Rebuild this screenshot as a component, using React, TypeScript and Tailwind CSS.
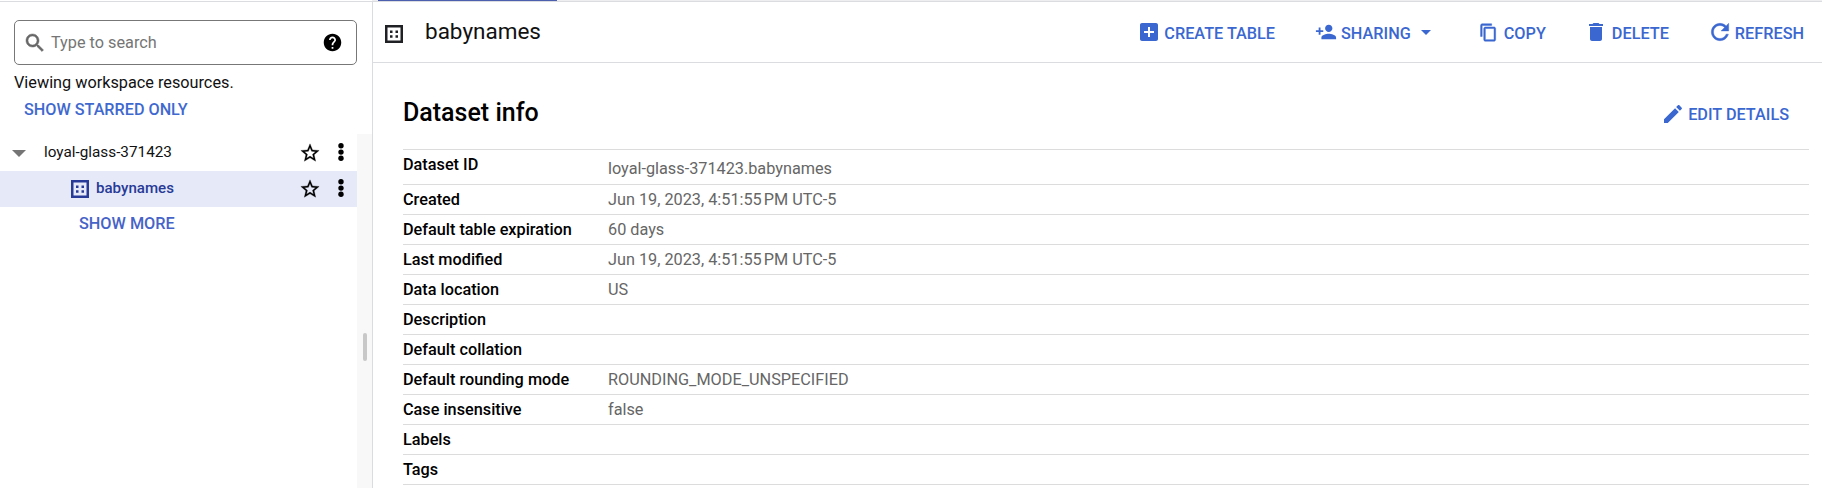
import type { ReactNode } from "react";

function Icon({ d, className }: { d: string; className: string }) {
  return (
    <svg viewBox="0 0 24 24" fill="currentColor" className={`shrink-0 ${className}`} aria-hidden="true">
      <path d={d} />
    </svg>
  );
}

const paths = {
  search:
    "M15.5 14h-.79l-.28-.27C15.41 12.59 16 11.11 16 9.5 16 5.91 13.09 3 9.5 3S3 5.91 3 9.5 5.91 16 9.5 16c1.61 0 3.09-.59 4.23-1.57l.27.28v.79l5 4.99L20.49 19l-4.99-5zm-6 0C7.01 14 5 11.99 5 9.5S7.01 5 9.5 5 14 7.01 14 9.5 11.99 14 9.5 14z",
  help: "M12 2C6.48 2 2 6.48 2 12s4.48 10 10 10 10-4.48 10-10S17.52 2 12 2zm1 17h-2v-2h2v2zm2.07-7.75l-.9.92C13.45 12.9 13 13.5 13 15h-2v-.5c0-1.1.45-2.1 1.17-2.83l1.24-1.26c.37-.36.59-.86.59-1.41 0-1.1-.9-2-2-2s-2 .9-2 2H8c0-2.21 1.79-4 4-4s4 1.79 4 4c0 .88-.36 1.68-.93 2.25z",
  star: "M22 9.24l-7.19-.62L12 2 9.19 8.63 2 9.24l5.46 4.73L5.82 21 12 17.27 18.18 21l-1.63-7.03L22 9.24zM12 15.4l-3.76 2.27 1-4.28-3.32-2.88 4.38-.38L12 6.1l1.71 4.04 4.38.38-3.32 2.88 1 4.28L12 15.4z",
  plusBox:
    "M19 3H5c-1.11 0-2 .9-2 2v14c0 1.1.89 2 2 2h14c1.1 0 2-.9 2-2V5c0-1.1-.9-2-2-2zm-2 10h-4v4h-2v-4H7v-2h4V7h2v4h4v2z",
  personAdd:
    "M15 12c2.21 0 4-1.79 4-4s-1.79-4-4-4-4 1.79-4 4 1.79 4 4 4zm-9-2V7H4v3H1v2h3v3h2v-3h3v-2H6zm9 4c-2.67 0-8 1.34-8 4v2h16v-2c0-2.66-5.33-4-8-4z",
  copy: "M16 1H4c-1.1 0-2 .9-2 2v14h2V3h12V1zm3 4H8c-1.1 0-2 .9-2 2v14c0 1.1.9 2 2 2h11c1.1 0 2-.9 2-2V7c0-1.1-.9-2-2-2zm0 16H8V7h11v14z",
  trash: "M6 19c0 1.1.9 2 2 2h8c1.1 0 2-.9 2-2V7H6v12zM19 4h-3.500l-1-1h-5l-1 1H5v2h14V4z",
  edit: "M3 17.250V21h3.750L17.810 9.940l-3.750-3.750L3 17.250zM20.710 7.040c.39-.39.39-1.020 0-1.410l-2.340-2.340c-.39-.39-1.020-.39-1.410 0l-1.830 1.830 3.750 3.750 1.830-1.830z",
  refresh:
    "M17.65 6.35C16.2 4.9 14.21 4 12 4c-4.420 0-7.990 3.580-7.990 8s3.570 8 7.990 8c3.730 0 6.840-2.550 7.730-6h-2.080c-.82 2.330-3.040 4-5.650 4-3.310 0-6-2.690-6-6s2.690-6 6-6c1.660 0 3.140.69 4.220 1.780L13 11h7V4l-2.350 2.350z",
};

function DatasetIcon({ className }: { className: string }) {
  return (
    <svg viewBox="0 0 18 18" fill="currentColor" className={`shrink-0 ${className}`} aria-hidden="true">
      <path fillRule="evenodd" d="M0 0h18v18H0zM2.500 2.500v13h13v-13z" />
      <path d="M5 5.500h2.500V8H5zM10.500 5.500H13V8h-2.500zM5 10.200h2.500v2.500H5zM10.500 10.200H13v2.500h-2.500z" />
    </svg>
  );
}

function RowTools() {
  return (
    <div className="ml-auto flex items-center gap-[17px] pr-[13px] text-black">
      <Icon d={paths.star} className="size-[22px] stroke-current stroke-[0.3]" />
      <svg viewBox="0 0 6 18" fill="currentColor" className="mb-0.5 h-[18px] w-1.5" aria-hidden="true">
        <circle cx="3" cy="2.700" r="2.700" />
        <circle cx="3" cy="9.100" r="2.700" />
        <circle cx="3" cy="15.300" r="2.700" />
      </svg>
    </div>
  );
}

interface ActionProps {
  className?: string;
  gap: string;
  icon: ReactNode;
  label: string;
  labelClass?: string;
}

function Action({ className = "", gap, icon, label, labelClass = "pt-1" }: ActionProps) {
  return (
    <button className={`flex items-center whitespace-nowrap ${gap} ${className}`}>
      {icon}
      <span className={labelClass}>{label}</span>
    </button>
  );
}

const rows: [string, string][] = [
  ["Created", "Jun 19, 2023, 4:51:55\u202fPM UTC-5"],
  ["Default table expiration", "60 days"],
  ["Last modified", "Jun 19, 2023, 4:51:55\u202fPM UTC-5"],
  ["Data location", "US"],
  ["Description", ""],
  ["Default collation", ""],
  ["Default rounding mode", "ROUNDING_MODE_UNSPECIFIED"],
  ["Case insensitive", "false"],
  ["Labels", ""],
  ["Tags", ""],
];

export default function App() {
  return (
    <div className="flex h-[488px] w-[1822px] flex-col overflow-hidden bg-white font-['Roboto',sans-serif] text-[16.25px] text-[#111]">
      <div className="flex h-0.5 shrink-0 border-b border-[#dadce0]">
        <div className="w-[372px]" />
        <div className="flex-1 bg-[#eeeef0] pl-1.5">
          <div className="h-px w-[179px] bg-[#4c5fae]" />
        </div>
      </div>

      <div className="flex min-h-0 flex-1">
        <aside className="flex w-[373px] shrink-0 flex-col border-r border-[#dadce0]">
          <div className="mt-[18px] ml-3.5 flex h-[45px] w-[343px] shrink-0 items-center rounded-[5px] border border-[#777] pl-2 text-[#757575]">
            <Icon d={paths.search} className="size-6 stroke-current stroke-[0.5] text-[#686868]" />
            <span className="ml-1 pt-px">Type to search</span>
            <Icon d={paths.help} className="mr-[13px] ml-auto size-[21px] text-black" />
          </div>
          <div className="mt-1.5 ml-3.5 h-6 leading-6">Viewing workspace resources.</div>
          <button className="mt-[3px] ml-6 h-6 self-start text-[16.2px] leading-6 font-medium text-[#3f69cf]">
            SHOW STARRED ONLY
          </button>

          <div className="mt-3 flex min-h-0 flex-1">
            <div className="flex w-[357px] flex-col text-[15.1px]">
              <div className="flex h-[37px] items-center pl-3">
                <svg viewBox="0 0 14 7" className="mt-0.5 h-[7px] w-3.5 fill-[#757575]" aria-hidden="true">
                  <path d="M0 0h14L7 7z" />
                </svg>
                <span className="ml-[18px] text-[15.3px]">loyal-glass-371423</span>
                <RowTools />
              </div>
              <div className="flex h-9 items-center bg-[#e6eaf8] pl-[71px] text-[#283a97]">
                <DatasetIcon className="size-[18px]" />
                <span className="ml-[7px] pb-0.5 font-medium">babynames</span>
                <RowTools />
              </div>
              <button className="mt-[5px] ml-[79px] h-6 self-start text-[16.25px] leading-6 font-medium text-[#4663c8]">
                SHOW MORE
              </button>
            </div>
            <div className="flex w-[15px] justify-center bg-[#f8f8f8] pt-[199px]">
              <div className="h-7 w-1 rounded-sm bg-[#c8c8c8]" />
            </div>
          </div>
        </aside>

        <main className="flex min-w-0 flex-1 flex-col">
          <header className="flex h-[61px] shrink-0 items-center border-b border-[#dadce0] pl-3">
            <DatasetIcon className="mt-1 size-[18px] text-[#202124]" />
            <h1 className="ml-[22px] pb-0.5 text-[22.5px] leading-7">babynames</h1>
            <div className="ml-auto flex pr-[18px] font-medium text-[#3a67d0]">
              <Action gap="gap-[3px]" icon={<Icon d={paths.plusBox} className="size-6" />} label="CREATE TABLE" />
              <div className="ml-10 flex items-center">
                <Action gap="gap-1" icon={<Icon d={paths.personAdd} className="size-[22px]" />} label="SHARING" />
                <svg viewBox="0 0 10 5" className="ml-2.5 h-[5px] w-2.5 fill-current" aria-hidden="true">
                  <path d="M0 0h10L5 5z" />
                </svg>
              </div>
              <Action
                className="ml-12"
                gap="gap-1.5"
                icon={<Icon d={paths.copy} className="size-[19px] stroke-current stroke-[0.6]" />}
                label="COPY"
              />
              <Action className="ml-[38px]" gap="gap-1" icon={<Icon d={paths.trash} className="size-6" />} label="DELETE" />
              <Action
                className="ml-[38px]"
                gap="gap-0.5"
                icon={<Icon d={paths.refresh} className="size-[26px] stroke-current stroke-[0.4]" />}
                label="REFRESH"
              />
            </div>
          </header>

          <section className="flex min-h-0 flex-1 flex-col pr-[13px] pl-[30px]">
            <div className="flex h-[86px] shrink-0 items-center justify-between pt-3">
              <h2 className="pt-px text-[25px] leading-8 font-medium text-black">Dataset info</h2>
              <div className="pt-1 pr-5 font-medium text-[#3a67d0]">
                <Action
                  gap="gap-[3px]"
                  icon={<Icon d={paths.edit} className="size-6" />}
                  label="EDIT DETAILS"
                  labelClass="pt-0.5"
                />
              </div>
            </div>
            <dl className="leading-[29px]">
              <div className="flex h-[35px] border-t border-[#dcdcdc]">
                <dt className="w-[205px] font-medium text-black">Dataset ID</dt>
                <dd className="pt-1 text-[#666]">loyal-glass-371423.babynames</dd>
              </div>
              {rows.map(([label, value]) => (
                <div key={label} className="flex h-[30px] border-t border-[#dcdcdc]">
                  <dt className="w-[205px] font-medium text-black">{label}</dt>
                  <dd className="text-[#666]">{value}</dd>
                </div>
              ))}
              <div className="border-t border-[#dcdcdc]" />
            </dl>
          </section>
        </main>
      </div>
    </div>
  );
}
